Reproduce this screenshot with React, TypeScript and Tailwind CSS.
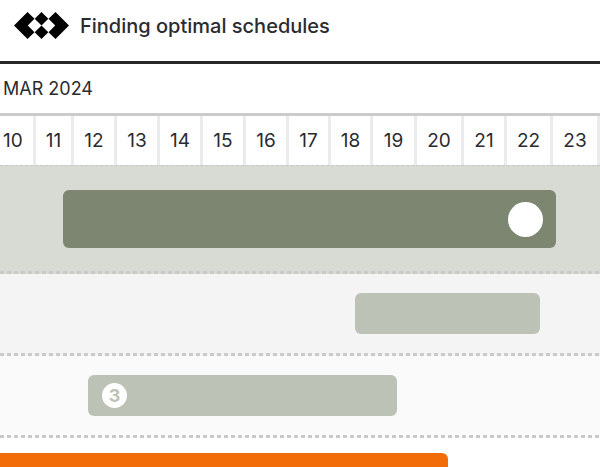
const days = [10, 11, 12, 13, 14, 15, 16, 17, 18, 19, 20, 21, 22, 23];

const Logo = () => {
  return (
    <svg
      className="h-[27px] w-[55px] shrink-0"
      viewBox="0 0 55 27"
      fill="black"
      aria-hidden="true"
    >
      <path d="M13.5 0 20.5 6.8 13.8 13.5 20.5 20.2 13.5 27 0 13.5Z" />
      <path d="M41.5 0 34.5 6.8 41.2 13.5 34.5 20.2 41.5 27 55 13.5Z" />
      <path d="M27.5 0 34.3 6.7 27.5 13.4 20.7 6.7Z" />
      <path d="M27.5 13.6 34.3 20.3 27.5 27 20.7 20.3Z" />
    </svg>
  );
};

const Dashes = () => {
  return (
    <div className="h-[3px] shrink-0 bg-[repeating-linear-gradient(90deg,#c9c9c9_0_4px,transparent_4px_7px)]" />
  );
};

export default function App() {
  return (
    <main className="flex h-screen flex-col overflow-hidden bg-white font-[Inter,sans-serif] text-[#2b2b2f]">
      <header className="flex h-16 shrink-0 items-center gap-[11px] border-b-[3px] border-[#28282b] px-3.5 pb-2.5">
        <Logo />
        <h1 className="text-xl font-medium">Finding optimal schedules</h1>
      </header>
      <div className="flex h-[52px] shrink-0 items-center border-b-[3px] border-[#cbcbcb] px-[3px]">
        <h2 className="text-lg">MAR 2024</h2>
      </div>
      <div className="grid h-[50px] shrink-0 grid-cols-[36fr_38fr_43fr_43fr_43fr_43fr_43fr_42fr_42fr_44fr_47fr_43fr_46fr_47fr] border-b border-dashed border-[#c6c9c1] bg-[#d8dbd3] text-[19px] leading-7">
        {days.map((day) => (
          <div
            key={day}
            className="flex items-center justify-center border-r-[3px] border-[#ebebeb] bg-white pt-px first:justify-start first:pl-[3px]"
          >
            {day}
          </div>
        ))}
      </div>

      <section className="shrink-0 bg-[#d8dbd3]">
        <div className="grid grid-cols-[63fr_493fr_44fr] pt-6 pb-[23px]">
          <div className="col-start-2 flex h-[58px] items-center justify-end rounded-md bg-[#7d8671] px-[13px]">
            <div className="size-[35px] rounded-full bg-white" />
          </div>
        </div>
        <Dashes />
      </section>
      <section className="shrink-0 bg-[#f4f4f4]">
        <div className="grid grid-cols-[355fr_185fr_60fr] py-[19px]">
          <div className="col-start-2 h-[41px] rounded-md bg-[#bcc2b6]" />
        </div>
        <Dashes />
      </section>
      <section className="shrink-0 bg-[#fafafa]">
        <div className="grid grid-cols-[88fr_309fr_203fr] py-[19px]">
          <div className="col-start-2 flex h-[41px] items-center rounded-md bg-[#bcc2b6] px-3.5">
            <span className="flex size-[25px] items-center justify-center rounded-full bg-white text-lg font-bold text-[#bcc2b6]">
              3
            </span>
          </div>
        </div>
        <Dashes />
      </section>
      <section className="grid flex-1 grid-cols-[448fr_152fr] pt-[15px]">
        <div className="rounded-tr-md bg-[#f36c0a]" />
      </section>
    </main>
  );
}
